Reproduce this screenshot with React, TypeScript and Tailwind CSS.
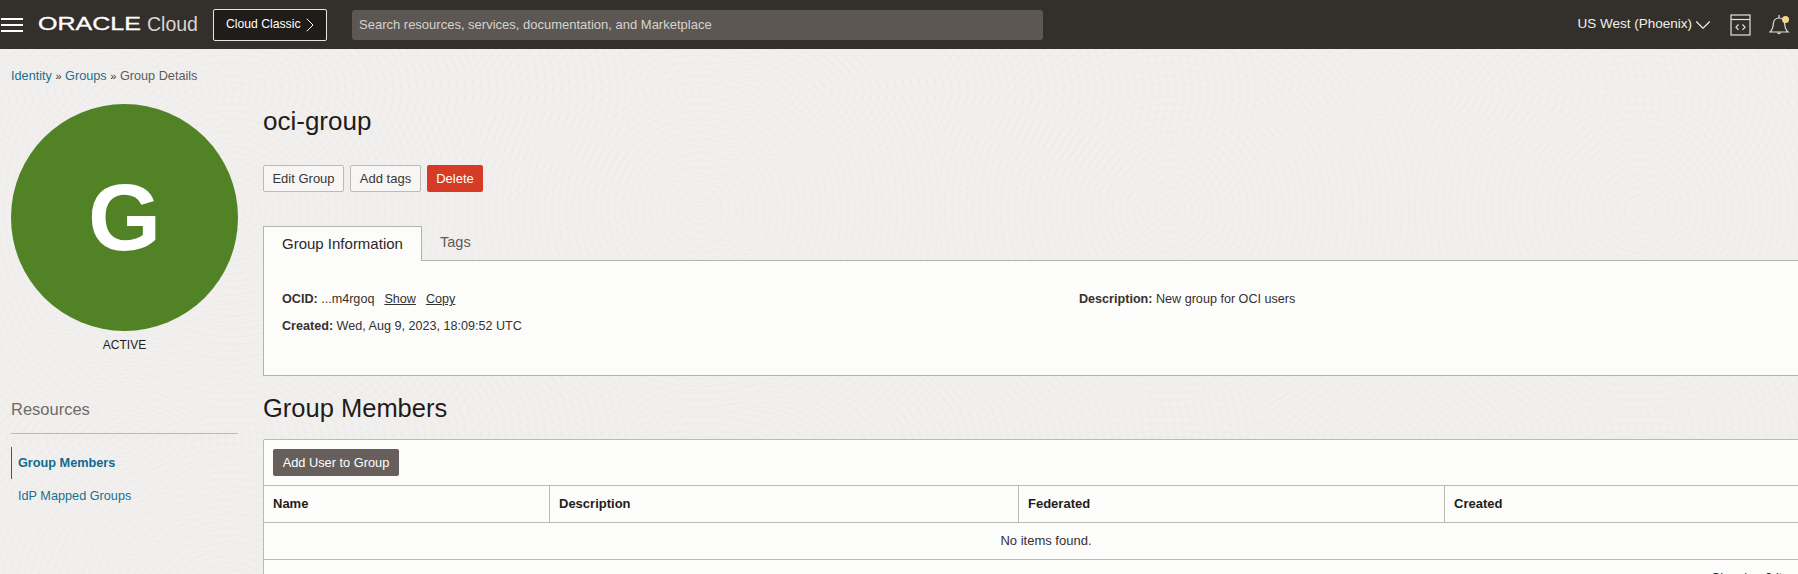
import { ChevronDown, ChevronRight } from 'lucide-react';

const font = "font-['Liberation_Sans',Arial,sans-serif]";

const columns = [
  { label: 'Name', width: 'w-[286px]' },
  { label: 'Description', width: 'w-[469px]' },
  { label: 'Federated', width: 'w-[426px]' },
  { label: 'Created', width: 'flex-1' },
];

const Header = () => (
  <header className="flex h-[49px] items-center bg-[#332f2b] text-white">
    <div className="ml-px flex h-[14px] w-[22px] flex-col justify-between">
      <span className="h-[2px] bg-white" />
      <span className="h-[2px] bg-white" />
      <span className="h-[2px] bg-white" />
    </div>
    <div className="ml-[15px] flex w-[160px] items-center">
      <span className="w-[109px] origin-left scale-x-[1.43] text-[17.5px] leading-none [-webkit-text-stroke:0.3px_white]">ORACLE</span>
      <span className="text-[19.5px] font-light leading-none text-[#d8d6d3]">Cloud</span>
    </div>
    <button className="ml-[15px] flex h-[32px] w-[114px] items-center rounded-[2px] border border-[#e8e6e3] bg-[#1f1c1a] pl-[12px] text-[12.2px]">
      Cloud Classic
      <ChevronRight size={24} strokeWidth={1} className="-ml-[3px]" />
    </button>
    <div className="ml-[25px] flex h-[30px] w-[691px] items-center rounded-[3px] bg-[#5c5753] pl-[7px] pt-px text-[13px] text-[#d6d3cf]">
      Search resources, services, documentation, and Marketplace
    </div>
    <div className="ml-auto flex items-center text-[#f1efed]">
      <span className="text-[13.5px]">US West (Phoenix)</span>
      <ChevronDown size={26} strokeWidth={1} className="-ml-[2px]" />
      <svg width="21" height="22" viewBox="0 0 21 22" fill="none" stroke="#e4e2df" className="ml-[14px]">
        <rect x="1" y="1" width="19" height="20" strokeWidth="1.2" />
        <path d="M1 5.500h19" strokeWidth="1.2" />
        <path d="M8.500 10.500 6 13.200l2.500 2.700M12.500 10.500l2.500 2.700-2.500 2.700" strokeWidth="1.2" />
      </svg>
      <svg width="22" height="23" viewBox="0 0 22 23" fill="none" stroke="#e4e2df" className="ml-[18px] mr-[7px]">
        <path d="M1 19h18c-2.600-2-3-4.500-3.300-8-.3-3.500-2.200-6-5.700-6s-5.400 2.500-5.700 6C4 14.500 3.600 17 1 19Z" strokeWidth="1.2" />
        <path d="M10 2v3M8.500 19.500a1.600 1.600 0 0 0 3 0" strokeWidth="1.2" />
        <circle cx="16.500" cy="6.500" r="3.500" fill="#f3d48e" stroke="none" />
      </svg>
    </div>
  </header>
);

const Sidebar = () => (
  <aside className="w-[263px] shrink-0 pl-[11px]">
    <div className="flex h-[227px] w-[227px] items-center justify-center rounded-full bg-[#528226] text-[94px] font-bold leading-none text-white">
      G
    </div>
    <p className="mt-[6px] w-[227px] text-center text-[12px] leading-[16px] text-[#1f1c1a]">ACTIVE</p>
    <h3 className="mt-[44px] text-[16.5px] font-light leading-[24px] text-[#6f6a66]">Resources</h3>
    <div className="mt-[12px] w-[227px] border-t border-[#bdb9b4]" />
    <nav className="mt-[13px] text-[12.7px]">
      <div className="flex h-[32px] items-center border-l border-[#0f6a8e] pl-[6px] pt-px font-bold text-[#0f6a8e]">Group Members</div>
      <div className="mt-[1px] flex h-[33px] items-center pl-[7px] text-[#1b708f]">IdP Mapped Groups</div>
    </nav>
  </aside>
);

const Main = () => (
  <main className="w-[1566px] shrink-0">
    <h1 className="mt-[1px] text-[26px] leading-[32px] text-[#1f1c1a]">oci-group</h1>
    <div className="mt-[28px] flex gap-[6px] text-[13px]">
      <button className="h-[27px] w-[81px] rounded-[2px] border border-[#bdb9b4] bg-[#f7f6f5] text-[#3b3734]">Edit Group</button>
      <button className="h-[27px] w-[71px] rounded-[2px] border border-[#bdb9b4] bg-[#f7f6f5] text-[#3b3734]">Add tags</button>
      <button className="h-[27px] w-[56px] rounded-[2px] bg-[#d63b25] text-white">Delete</button>
    </div>

    <div className="mt-[34px] flex h-[34px] items-stretch">
      <div className="z-10 -mb-px flex w-[159px] items-center border border-b-0 border-[#b5b1ac] bg-[#fcfcfb] pl-[18px] text-[15px] font-medium text-[#2b2826]">
        Group Information
      </div>
      <div className="flex items-center pl-[18px] text-[14.5px] text-[#5f5a56]">Tags</div>
    </div>
    <section className="h-[116px] border border-[#b5b1ac] bg-[#fcfcfb] pl-[18px] pt-[29px] text-[12.6px] leading-[18px] text-[#35312e]">
      <div className="flex">
        <div className="w-[797px]">
          <b>OCID:</b> ...m4rgoq
          <a className="ml-[10px] underline">Show</a>
          <a className="ml-[10px] underline">Copy</a>
        </div>
        <div>
          <b>Description:</b> New group for OCI users
        </div>
      </div>
      <div className="mt-[9px]">
        <b>Created:</b> Wed, Aug 9, 2023, 18:09:52 UTC
      </div>
    </section>

    <h2 className="mt-[16px] text-[25.5px] leading-[32px] text-[#1f1c1a]">Group Members</h2>

    <section className="mt-[15px] rounded-t-[2px] border-x border-t border-[#bdb9b4] bg-[#fcfcfb] text-[13px]">
      <div className="flex h-[45px] items-start pl-[9px] pt-[9px]">
        <button className="h-[27px] w-[126px] rounded-[2px] bg-[#665f5b] text-[12.8px] text-white">Add User to Group</button>
      </div>
      <div className="flex h-[38px] border-y border-[#bdb9b4] font-bold text-[#1f1c1a]">
        {columns.map((col, idx) => (
          <div
            key={col.label}
            className={`${col.width} flex items-center pl-[9px] ${idx < columns.length - 1 ? 'border-r border-[#bdb9b4]' : ''}`}
          >
            {col.label}
          </div>
        ))}
      </div>
      <div className="flex h-[37px] items-center justify-center border-b border-[#bdb9b4] text-[#35312e]">No items found.</div>
      <div className="pr-[21px] pt-[8px] text-right text-[#1f1c1a]">Showing 0 items</div>
    </section>
  </main>
);

export default function App() {
  return (
    <div
      className={`${font} h-[574px] w-[1798px] overflow-hidden bg-[#f1f0ef] bg-[image:repeating-radial-gradient(circle_at_230px_210px,rgba(120,115,110,0.016)_0px,rgba(120,115,110,0.016)_2px,transparent_2px,transparent_7px),repeating-radial-gradient(ellipse_at_120px_90px,rgba(120,115,110,0.012)_0px,rgba(120,115,110,0.012)_3px,transparent_3px,transparent_8px)] bg-[length:470px_410px,630px_350px]`}
    >
      <Header />
      <div className="px-[11px] pt-[19px] text-[12.7px] leading-[16px] text-[#5f5a56]">
        <a className="text-[#1b708f]">Identity</a> <span className="text-[11px] text-[#35312e]">»</span> <a className="text-[#1b708f]">Groups</a> <span className="text-[11px] text-[#35312e]">»</span> Group Details
      </div>
      <div className="mt-[20px] flex">
        <Sidebar />
        <Main />
      </div>
    </div>
  );
}
